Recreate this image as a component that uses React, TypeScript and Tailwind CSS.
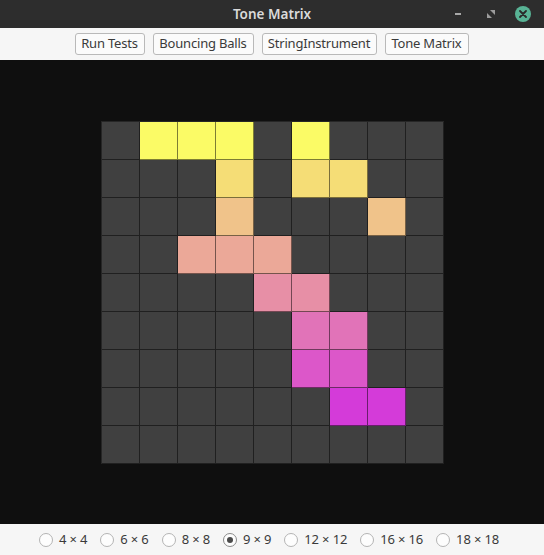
import React from "react";

const rowColors = [
  "bg-[#fbfb66]",
  "bg-[#f5dd76]",
  "bg-[#f0c38a]",
  "bg-[#eba898]",
  "bg-[#e78fa6]",
  "bg-[#e173b8]",
  "bg-[#dc57c9]",
  "bg-[#d43bd9]",
  "bg-[#cd20e8]",
];

const active: number[][] = [
  [1, 2, 3, 5],
  [3, 5, 6],
  [3, 7],
  [2, 3, 4],
  [4, 5],
  [5, 6],
  [5, 6],
  [6, 7],
  [],
];

const sizes = ["4 × 4", "6 × 6", "8 × 8", "9 × 9", "12 × 12", "16 × 16", "18 × 18"];

function Btn({ label, w }: { label: string; w: string }) {
  return (
    <button
      className={`${w} h-[22px] border border-[#b9b9b9] rounded-[3px] bg-[#fbfbfb] text-[13px] leading-none text-[#3a3a3a] tracking-[-0.2px] flex items-center justify-center whitespace-nowrap`}
    >
      {label}
    </button>
  );
}

export default function App() {
  return (
    <div
      className="w-[544px] h-[555px] flex flex-col overflow-hidden"
      style={{ fontFamily: '"Noto Sans", "Open Sans", sans-serif' }}
    >
      {/* Title bar */}
      <div className="h-[28px] bg-[#2d2d2d] grid grid-cols-[1fr_auto_1fr] items-center">
        <div />
        <div className="text-[13.5px] font-semibold text-[#dadada]">Tone Matrix</div>
        <div className="flex items-center justify-end pr-[13px]">
          <div className="w-[6px] h-[2px] bg-[#a8a8a8] mr-[26px]" />
          <svg width="8" height="8" viewBox="0 0 8 8" className="mr-[20px]">
            <path d="M3 0 H8 V5 Z" fill="#9c9c9c" />
            <path d="M0 3 V8 H5 Z" fill="#9c9c9c" />
          </svg>
          <div className="w-[16px] h-[16px] rounded-full bg-[#58b395] flex items-center justify-center">
            <svg width="8" height="8" viewBox="0 0 8 8">
              <path d="M1 1 L7 7 M7 1 L1 7" stroke="#2b2b2b" strokeWidth="1.8" strokeLinecap="round" />
            </svg>
          </div>
        </div>
      </div>

      {/* Toolbar */}
      <div className="h-[32px] bg-[#f6f6f6] flex items-center justify-center gap-[8px] pb-[1px] pr-[1px]">
        <Btn label="Run Tests" w="w-[70px]" />
        <Btn label="Bouncing Balls" w="w-[101px]" />
        <Btn label="StringInstrument" w="w-[115px]" />
        <Btn label="Tone Matrix" w="w-[84px]" />
      </div>

      {/* Canvas */}
      <div className="flex-1 bg-[#0f0f0f] flex items-center justify-center">
        <div className="border-l border-t border-[#262626] flex flex-col">
          {rowColors.map((c, r) => (
            <div key={r} className="flex">
              {Array.from({ length: 9 }).map((_, col) => {
                const on = active[r].includes(col);
                return (
                  <div
                    key={col}
                    className={`w-[38px] h-[38px] border-r border-b border-black/50 ${on ? c : "bg-[#404040]"}`}
                  />
                );
              })}
            </div>
          ))}
        </div>
      </div>

      {/* Bottom radio bar */}
      <div className="h-[31px] bg-[#f6f6f6] flex items-center justify-center gap-[13px] pr-[6px]">
        {sizes.map((s) => {
          const checked = s === "9 × 9";
          return (
            <label key={s} className="flex items-center gap-[6px] text-[13px] tracking-[-0.15px] text-[#3a3a3a]">
              <span
                className={`w-[14px] h-[14px] rounded-full border flex items-center justify-center bg-[#fdfdfd] ${
                  checked ? "border-[#8a8a8a]" : "border-[#b4b4b4]"
                }`}
              >
                {checked && <span className="w-[6px] h-[6px] rounded-full bg-[#4a4a4a]" />}
              </span>
              <span>{s}</span>
            </label>
          );
        })}
      </div>
    </div>
  );
}
